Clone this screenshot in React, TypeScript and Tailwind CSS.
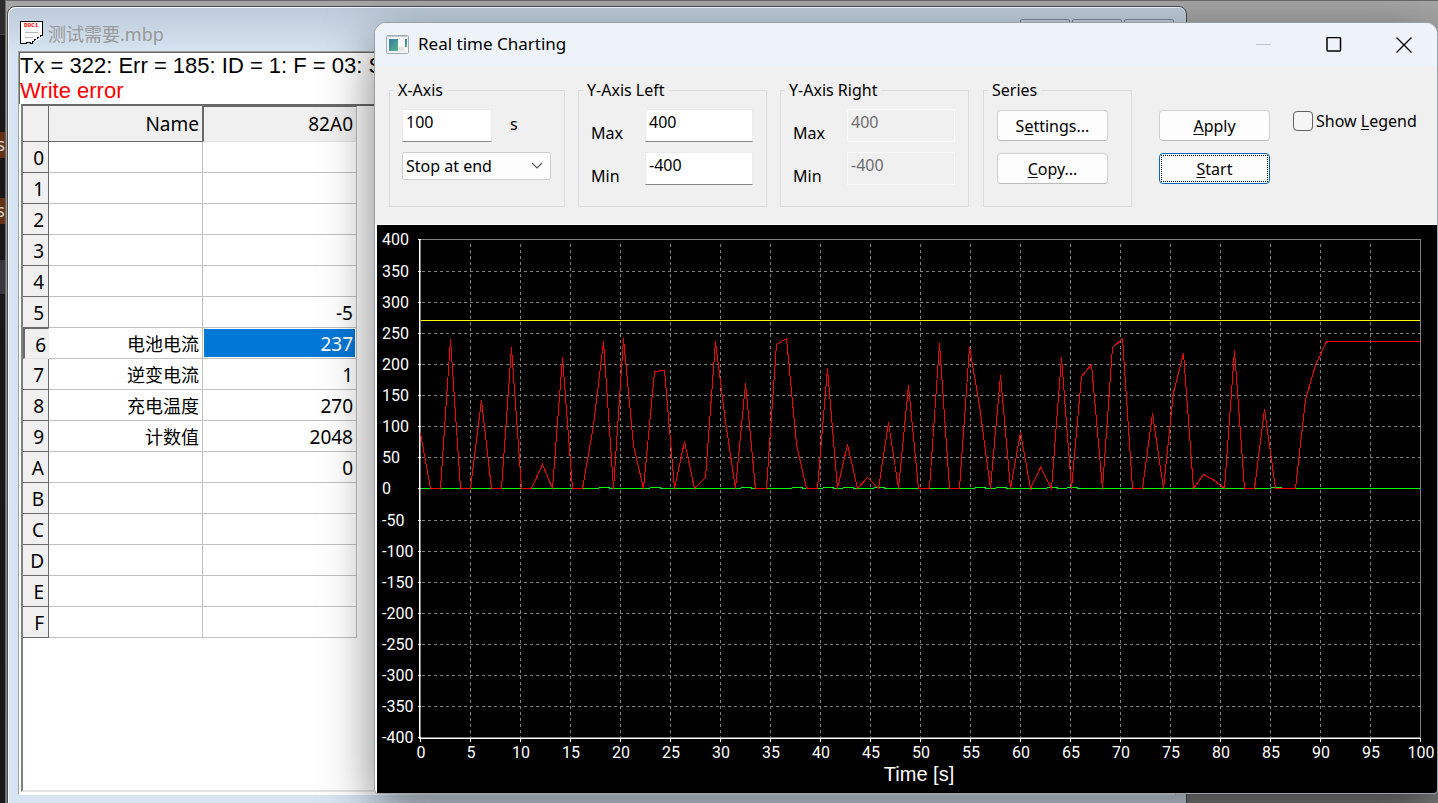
import { useState } from "react"

const gridRows = [
  { id: "0", name: "", value: "" },
  { id: "1", name: "", value: "" },
  { id: "2", name: "", value: "" },
  { id: "3", name: "", value: "" },
  { id: "4", name: "", value: "" },
  { id: "5", name: "", value: "-5" },
  { id: "6", name: "电池电流", value: "237" },
  { id: "7", name: "逆变电流", value: "1" },
  { id: "8", name: "充电温度", value: "270" },
  { id: "9", name: "计数值", value: "2048" },
  { id: "A", name: "", value: "0" },
  { id: "B", name: "", value: "" },
  { id: "C", name: "", value: "" },
  { id: "D", name: "", value: "" },
  { id: "E", name: "", value: "" },
  { id: "F", name: "", value: "" },
]

// battery current, one sample every SAMPLE_S seconds
const SAMPLE_S = 1.018
const current = [
  89, 0, 0, 240, 0, 0, 142, 0, 0, 227, 0, 0, 40, 0, 211, 0, 0, 102, 237, 0,
  241, 70, 0, 189, 191, 0, 76, 0, 19, 237, 109, 0, 169, 0, 0, 232, 241, 71, 0, 0,
  193, 0, 72, 0, 18, 0, 106, 0, 166, 0, 0, 233, 0, 0, 227, 134, 0, 182, 0, 90,
  0, 34, 0, 212, 0, 180, 200, 0, 227, 241, 0, 0, 121, 0, 155, 217, 0, 23, 13, 0,
  222, 0, 0, 127, 0, 0, 0, 144, 198, 237,
]
// samples where the inverter current reads 1 instead of 0
const blips = [18, 23, 32, 37, 40, 42, 45, 55, 57, 62, 64, 84]

const px = (t: number) => Math.floor(43 + t * 10)
const py = (v: number) => Math.round(263.4 - v * 0.622)

const xTicks = Array.from({ length: 21 }, (_, i) => i * 5)
const yTicks = Array.from({ length: 17 }, (_, i) => 400 - i * 50)

function Chart() {
  const points = current.map((v, i) => `${px(i * SAMPLE_S)},${py(v)}`).join(" ")
  return (
    <svg viewBox="0 0 1060 568" className="block w-full h-full" role="img" aria-label="Real time chart">
      <g shapeRendering="crispEdges" fill="none" transform="translate(0.5 0.5)">
        <g stroke="#808080" strokeDasharray="3 3">
          {yTicks.slice(1, -1).map((v) => (
            <path key={v} d={`M44 ${py(v)}H1042`} />
          ))}
          {xTicks.slice(1, -1).map((t) => (
            <path key={t} d={`M${px(t)} 18V512`} />
          ))}
        </g>
        <path d="M43 14H1043V512H43Z" stroke="#808080" />
        <path d="M42 14V513H1043" stroke="#fff" />
        <g stroke="#fff">
          {yTicks.map((v) => (
            <path key={v} d={`M40 ${v === 400 ? 14 : py(v)}H43`} />
          ))}
          {xTicks.map((t) => (
            <path key={t} d={`M${px(t)} 513V516`} />
          ))}
        </g>
        <path d="M43 95H1042" stroke="#ff0" />
        <path d="M43 263H1042" stroke="#0f0" />
        {blips.map((i) => (
          <g key={i}>
            <path d={`M${px(i * SAMPLE_S) - 5} 263h10`} stroke="#000" />
            <path d={`M${px(i * SAMPLE_S) - 5} 262h11`} stroke="#0f0" />
          </g>
        ))}
        <polyline points={`${points} 1042,${py(237)}`} stroke="#f00" />
      </g>
      <g fill="#fff" fontSize="16" fontFamily="Roboto, 'Liberation Sans', sans-serif">
        {yTicks.map((v) => (
          <text key={v} x="5" y={(v === 400 ? 14 : py(v)) + 6}>
            {v}
          </text>
        ))}
        {xTicks.map((t) => (
          <text key={t} x={px(t) + 1} y="533" textAnchor="middle">
            {t}
          </text>
        ))}
      </g>
      <text x="542" y="556" textAnchor="middle" fill="#fff" fontSize="20" fontFamily="'Liberation Sans', Arial, sans-serif">
        Time [s]
      </text>
    </svg>
  )
}

function DocIcon() {
  return (
    <svg width="24" height="24" viewBox="0 0 24 24" shapeRendering="crispEdges" aria-hidden="true">
      <path d="M0.5 1.5H22.5V15.5H20.5V17.5H17.5V19.5H14.5V21.5H12.5V23.5H10.5V22.5H6.5V23.5H0.5Z" fill="#fff" stroke="#000" />
      <path d="M22 17.5H19.5V19.5H16.5V21.5H14" fill="none" stroke="#f4f4f4" />
      <path d="M5 12.5h13M5 17.5h8" stroke="#b8b8b8" />
      <text x="4" y="7" fontSize="6" fontWeight="700" fontFamily="'Liberation Mono', monospace" fill="#f00000">
        DOC1
      </text>
    </svg>
  )
}

function ChartIcon() {
  return (
    <svg width="24" height="20" viewBox="0 0 24 20" aria-hidden="true">
      <defs>
        <linearGradient id="screen" x1="0" y1="0" x2="1" y2="1">
          <stop offset="0" stopColor="#3c78ab" />
          <stop offset="1" stopColor="#56b583" />
        </linearGradient>
      </defs>
      <rect x="0.5" y="0.5" width="22" height="18" rx="1" fill="#f3f3f3" stroke="#a3adb5" />
      <path d="M1 1.5h21" stroke="#c3cbd2" />
      <rect x="3" y="4" width="9" height="12" fill="url(#screen)" />
      <rect x="13" y="4" width="5" height="7" fill="#fbf8f5" />
      <rect x="13" y="12" width="5" height="4" fill="#e8e8e8" />
      <rect x="19" y="4" width="2" height="8" fill="url(#screen)" />
    </svg>
  )
}

type AxisProps = {
  title: string
  id: string
  disabled?: boolean
}

function AxisGroup({ title, id, disabled }: AxisProps) {
  const field = [
    "block w-[108px] h-[33px] pl-[3px] pb-[7px] border outline-none",
    disabled
      ? "bg-[#f0f0f0] border-[#f9f9f9] text-[#6d6d6d]"
      : "bg-white border-[#ebebeb] border-b-[#868686]",
  ].join(" ")
  return (
    <fieldset className="w-[189px] h-32 shrink-0 border border-[#dcdcdc] pl-3 pr-[13px]">
      <legend className="-ml-2 px-1 leading-[22px]">{title}</legend>
      <div className="mt-2 flex flex-col gap-[10px]">
        <div className="flex justify-between">
          <label htmlFor={id + "-max"} className="pt-[13px] h-[33px]">Max</label>
          <input id={id + "-max"} className={field} defaultValue="400" disabled={disabled} />
        </div>
        <div className="flex justify-between">
          <label htmlFor={id + "-min"} className="pt-[13px] h-[33px]">Min</label>
          <input id={id + "-min"} className={field} defaultValue="-400" disabled={disabled} />
        </div>
      </div>
    </fieldset>
  )
}

const pushButton =
  "w-[111px] h-[31px] rounded bg-[#fdfdfd] border border-[#d0d0d0] border-b-[#bababa] flex items-center justify-center"

function ChartWindow() {
  const [legend, setLegend] = useState(false)
  return (
    <section className="absolute left-[374px] top-[22px] right-0 bottom-[9px] flex flex-col overflow-hidden rounded-t-xl rounded-b border border-[#98a1aa] bg-[#f0f0f0] font-['Noto_Sans','Open_Sans',sans-serif] text-base leading-[22px] text-black shadow-[0_16px_50px_rgba(0,0,0,0.5)]">
      <header className="h-[43px] shrink-0 flex items-center bg-[#eef3fa] pl-[11px]">
        <ChartIcon />
        <h1 className="ml-2 pb-[2px] flex-1 text-[17px]">Real time Charting</h1>
        <button className="w-[70px] h-full pl-1 flex items-center justify-center" aria-label="Minimize">
          <svg width="16" height="16" viewBox="0 0 16 16"><path d="M0 7.5h15" stroke="#c0c4c9" /></svg>
        </button>
        <button className="w-[70px] h-full pl-1 flex items-center justify-center" aria-label="Maximize">
          <svg width="16" height="16" viewBox="0 0 16 16">
            <rect x="1" y="0.5" width="13.5" height="13.5" rx="1" fill="none" stroke="#000" strokeWidth="1.5" />
          </svg>
        </button>
        <button className="w-[70px] h-full pl-1 flex items-center justify-center" aria-label="Close">
          <svg width="16" height="16" viewBox="0 0 16 16">
            <path d="M.5.5l15 15M15.5.5l-15 15" stroke="#000" strokeWidth="1.3" />
          </svg>
        </button>
      </header>

      <form className="h-[158px] shrink-0 flex items-start gap-[13px] pl-[14px] pt-[13px]" onSubmit={(e) => e.preventDefault()}>
        <fieldset className="w-44 h-32 shrink-0 border border-[#dcdcdc] px-3">
          <legend className="-ml-2 px-1 leading-[22px]">X-Axis</legend>
          <div className="mt-2 flex items-center">
            <input
              id="span"
              className="block w-[90px] h-[33px] pl-[3px] pb-[7px] bg-white border border-[#ebebeb] border-b-[#868686] outline-none"
              defaultValue="100"
            />
            <label htmlFor="span" className="ml-[18px] -mt-1">s</label>
          </div>
          <div className="relative mt-[10px]">
            <select
              aria-label="End mode"
              className="block w-[149px] h-7 pl-[3px] appearance-none rounded-xs bg-[#fdfdfd] border border-[#cfcfcf] outline-none"
            >
              <option>Stop at end</option>
            </select>
            <svg className="absolute left-[129px] top-[10px] pointer-events-none" width="12" height="8" viewBox="0 0 12 8">
              <path d="M1 1l5 5 5-5" fill="none" stroke="#5a5a5a" strokeWidth="1.2" />
            </svg>
          </div>
        </fieldset>

        <AxisGroup title="Y-Axis Left" id="left" />
        <AxisGroup title="Y-Axis Right" id="right" disabled />

        <fieldset className="ml-px w-[149px] h-32 shrink-0 border border-[#dcdcdc] px-[13px]">
          <legend className="-ml-[9px] px-1 leading-[22px]">Series</legend>
          <div className="mt-[9px] flex flex-col gap-3">
            <button type="button" className={pushButton}>
              <span>S<u className="underline-offset-2">e</u>ttings...</span>
            </button>
            <button type="button" className={pushButton}>
              <span><u className="underline-offset-2">C</u>opy...</span>
            </button>
          </div>
        </fieldset>

        <div className="ml-[14px] mt-[31px] flex flex-col gap-3">
          <button type="button" className={pushButton}>
            <span><u className="underline-offset-2">A</u>pply</span>
          </button>
          <button
            type="button"
            className="w-[111px] h-[31px] rounded bg-[#fdfdfd] border border-[#0067c0] p-px flex"
          >
            <span className="flex-1 h-full flex items-center justify-center border border-dotted border-black">
              <span><u className="underline-offset-2">S</u>tart</span>
            </span>
          </button>
        </div>

        <label className="ml-[10px] mt-[31px] flex items-center gap-[3px] whitespace-nowrap">
          <input
            type="checkbox"
            checked={legend}
            onChange={(e) => setLegend(e.target.checked)}
            className="w-5 h-5 appearance-none rounded border border-[#626262] bg-[#f5f5f5] checked:bg-[#0067c0]"
          />
          <span>Show <u className="underline-offset-2">L</u>egend</span>
        </label>
      </form>

      <div className="flex-1 min-h-0 border-t border-l-2 border-t-white border-l-white bg-black">
        <Chart />
      </div>
    </section>
  )
}

function PollWindow() {
  return (
    <section className="absolute left-[7px] top-[6px] -bottom-2 w-[1180px] flex flex-col rounded-t-lg border border-[#4c4c4c] bg-[#d7e4f2] bg-linear-to-b from-[#bccad9] to-[#d7e4f2] to-[46px] shadow-[inset_1px_1px_0_#f4f8fc]">
      <header className="h-11 shrink-0 flex items-start pl-3 pt-[13px]">
        <DocIcon />
        <h2 className="ml-1 flex-1 text-lg leading-7 text-[#999] font-['Noto_Sans','Noto_Sans_CJK_SC',sans-serif]">
          测试需要.mbp
        </h2>
        <div className="-mt-px flex gap-[2px] pr-3">
          <button className="w-[50px] h-6 rounded-xs border border-[#7d8698]" aria-label="Minimize" />
          <button className="w-[50px] h-6 rounded-xs border border-[#7d8698]" aria-label="Restore" />
          <button className="w-[50px] h-6 rounded-xs border border-[#7d8698]" aria-label="Close" />
        </div>
      </header>

      <div className="flex-1 min-h-0 mx-[10px] mb-[15px] flex flex-col border border-[#a0a0a0] border-b-white bg-white">
        <div className="pb-px border-l border-t border-[#696969] text-[22px] leading-[25px] whitespace-nowrap font-['Liberation_Sans',Arial,sans-serif]">
          <p>Tx = 322: Err = 185: ID = 1: F = 03: SR = 1000ms</p>
          <p className="text-[#ff0000]">Write error</p>
        </div>
        <div className="flex-1 min-h-0 ml-[2px] mb-[2px] border-2 border-[#696969] border-l-[#808080] border-b-[#e3e3e3] bg-white">
          <table className="table-fixed w-[334px] border-separate border-spacing-0 text-right text-[19px] leading-[26px] font-['Noto_Sans','Noto_Sans_CJK_SC',sans-serif] text-black">
            <colgroup>
              <col className="w-[26px]" />
              <col className="w-[154px]" />
              <col className="w-[154px]" />
            </colgroup>
            <thead>
              <tr className="h-9 bg-[#f0f0f0]">
                <th className="border-r border-b border-[#696969]" />
                <th className="pr-[3px] pt-px font-normal border-r border-b border-[#696969]">Name</th>
                <th className="pr-[3px] font-normal border-t border-l border-r border-b border-t-[#696969] border-l-[#696969] border-r-[#c0c0c0] border-b-[#e3e3e3]">
                  82A0
                </th>
              </tr>
            </thead>
            <tbody>
              {gridRows.map((row) => {
                const selected = row.id === "6"
                return (
                  <tr key={row.id} className="h-[31px]">
                    <th
                      className={[
                        "p-0 pt-[2px] font-normal bg-[#f0f0f0]",
                        selected
                          ? "pr-[2px] border-t border-l-2 border-r border-b border-t-[#696969] border-l-[#696969] border-r-[#f0f0f0] border-b-[#e3e3e3]"
                          : "pr-1 border-r border-b border-[#696969]",
                      ].join(" ")}
                    >
                      {row.id}
                    </th>
                    <td className="p-0 pt-[2px] pr-[3px] text-lg leading-[26px] border-r border-b border-[#c0c0c0]">
                      {row.name}
                    </td>
                    <td
                      className={[
                        "p-0 pt-[2px] pr-[3px] border-r border-b border-[#c0c0c0]",
                        selected ? "bg-[#0078d7] text-white shadow-[inset_0_0_0_1px_#fff]" : "",
                      ].join(" ")}
                    >
                      {row.value}
                    </td>
                  </tr>
                )
              })}
            </tbody>
          </table>
        </div>
      </div>
    </section>
  )
}

export default function App() {
  return (
    <main className="relative h-screen overflow-hidden flex bg-[#9c9c9c]">
      {/* sliver of the editor behind the application */}
      <aside className="w-[5px] shrink-0 flex flex-col bg-[#181818] overflow-hidden text-lg leading-6 text-[#d0d0d0] font-['Noto_Sans',sans-serif]">
        <div className="h-[35px] bg-[#2d2d2d] border-b border-[#444]" />
        <div className="mt-[97px] h-[26px] shrink-0 flex justify-end bg-[#653114]">s</div>
        <div className="mt-10 h-[26px] shrink-0 flex justify-end bg-[#653114]">ns</div>
        <div className="mt-9 h-[34px] shrink-0 bg-[#37373d]" />
      </aside>
      <div className="flex-1 border-l border-t border-[#696969] bg-linear-to-b from-[#a6a6a6] to-[#808080]" />
      <PollWindow />
      <ChartWindow />
    </main>
  )
}
